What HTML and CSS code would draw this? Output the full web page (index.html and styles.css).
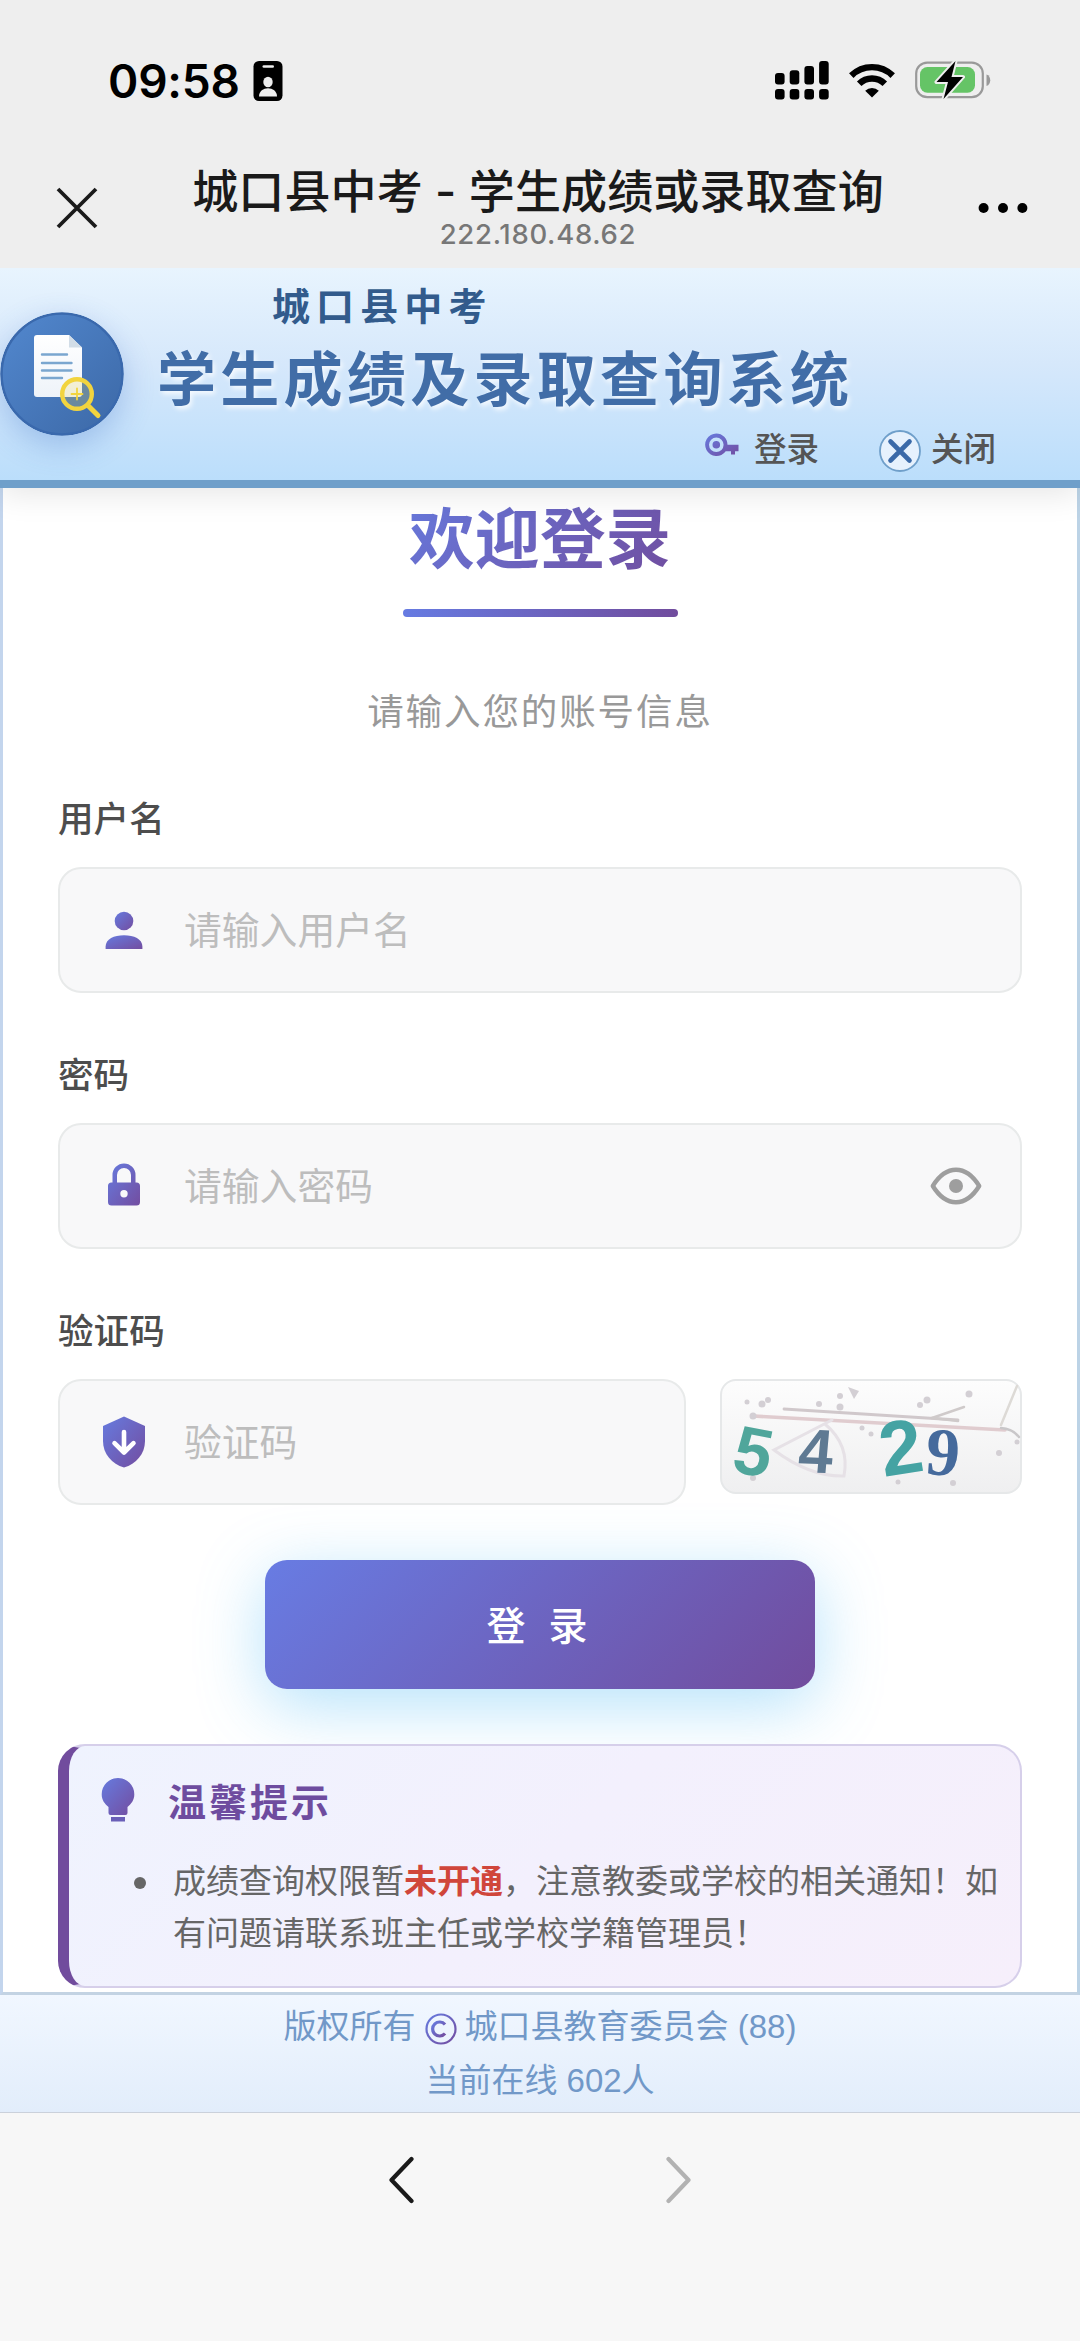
FILE: index.html
```html
<!DOCTYPE html>
<html lang="zh-CN">
<head>
<meta charset="utf-8">
<title>城口县中考 - 学生成绩或录取查询</title>
<link rel="stylesheet" href="styles.css">
</head>
<body>
<svg class="defs" width="0" height="0" aria-hidden="true">
  <defs>
    <linearGradient id="brand" x1="0" y1="0" x2="1" y2="1"><stop offset="0" stop-color="#667bdf"/><stop offset="1" stop-color="#734da0"/></linearGradient>
    <linearGradient id="badge" x1="0" y1="0" x2="1" y2="1"><stop offset="0" stop-color="#5288cf"/><stop offset="1" stop-color="#3c68a6"/></linearGradient>
    <linearGradient id="paper" x1="0" y1="0" x2="0" y2="1"><stop offset="0" stop-color="#ffffff"/><stop offset="1" stop-color="#eef3f9"/></linearGradient>
    <linearGradient id="noise" x1="0" y1="0" x2="0" y2="1"><stop offset="0" stop-color="#fdfdfd"/><stop offset="1" stop-color="#efeff0"/></linearGradient>
  </defs>
</svg>

<div class="status-bar">
  <div class="status-left">
    <span class="clock">09:58</span>
    <svg class="id-icon" width="30" height="40" viewBox="0 0 30 40"><rect x=".5" width="29" height="40" rx="5.5"/><rect x="9.5" y="4.2" width="11.5" height="2.6" rx="1.3" fill="#eee"/><ellipse cx="15" cy="21" rx="4.7" ry="5.3" fill="#eee"/><path d="M6 35.5c0-11 18-11 18 0z" fill="#eee"/></svg>
  </div>
  <div class="status-right">
    <svg width="54" height="39" viewBox="0 0 54 39"><rect y="12" width="9.6" height="11.5" rx="3"/><rect x="14.7" y="9.3" width="9.6" height="14.2" rx="3"/><rect x="29.4" y="5" width="9.6" height="18.5" rx="3"/><rect x="44.1" width="9.6" height="23.5" rx="3"/><rect y="28" width="9.6" height="10.5" rx="3"/><rect x="14.7" y="28" width="9.6" height="10.5" rx="3"/><rect x="29.4" y="28" width="9.6" height="10.5" rx="3"/><rect x="44.1" y="28" width="9.6" height="10.5" rx="3"/></svg>
    <svg class="wifi" width="46" height="35" viewBox="0 0 46 35"><g fill="none" stroke="#000" stroke-width="6.4"><path d="M2.3 12.6a29.5 29.5 0 0 1 41.4 0"/><path d="M10.2 20.8a18.2 18.2 0 0 1 25.6 0"/></g><path d="M23 34.5l-6.8-6.8a9.8 9.8 0 0 1 13.6 0z"/></svg>
    <svg class="battery" width="76" height="40" viewBox="0 0 76 40"><rect x="1.2" y="2.6" width="66.6" height="34.6" rx="11" fill="none" stroke="#999" stroke-width="2.2"/><rect x="5" y="7" width="55" height="25.8" rx="7.5" fill="#65c466"/><path d="M71.5 14.5c5 1.5 5 10 0 11.5z" fill="#999"/><path d="M40.5 1L21.5 22h11.5L28.5 39 48 17H36.5z" fill="#000" stroke="#eee" stroke-width="4" paint-order="stroke" stroke-linejoin="round"/></svg>
  </div>
</div>

<div class="nav-bar">
  <svg class="nav-close" width="42" height="42" viewBox="0 0 42 42"><path d="M2 2l38 38M40 2L2 40" stroke="#1a1a1a" stroke-width="3.8"/></svg>
  <div class="nav-titles">
    <div class="nav-title">城口县中考 - 学生成绩或录取查询</div>
    <div class="nav-host">222.180.48.62</div>
  </div>
  <svg class="nav-more" width="50" height="12" viewBox="0 0 50 12"><circle cx="5.6" cy="6" r="5"/><circle cx="25" cy="6" r="5"/><circle cx="44.4" cy="6" r="5"/></svg>
</div>

<header class="site-header">
  <svg class="logo" width="124" height="124" viewBox="0 0 124 124">
    <circle cx="62" cy="62" r="60.5" fill="url(#badge)" stroke="#3a69ad" stroke-width="2.6"/>
    <path d="M37 23h32l13 12.500V82a3 3 0 0 1-3 3H37a3 3 0 0 1-3-3V26a3 3 0 0 1 3-3z" fill="url(#paper)"/>
    <path d="M69 23l13 12.500H69z" fill="#d2dde7"/>
    <path d="M42 42.500h25M42 51h29.500M42 58.500h29.500M42 66h20" stroke="#7aa6cf" stroke-width="2.4" stroke-linecap="round"/>
    <circle cx="77" cy="82" r="14.8" fill="#f4d956" fill-opacity=".22" stroke="#f2d43e" stroke-width="4.4"/>
    <path d="M88.500 94L98 103.500" stroke="#f2d43e" stroke-width="5" stroke-linecap="round"/>
    <path d="M77 76.500v11M71.500 82h11" stroke="#f2d43e" stroke-width="1.8" stroke-linecap="round"/>
  </svg>
  <div class="brand">
    <div class="brand-region">城口县中考</div>
    <h1 class="brand-name">学生成绩及录取查询系统</h1>
    <nav class="brand-links">
      <a class="link-login"><svg width="34" height="24" viewBox="0 0 34 24"><path fill="url(#brand)" fill-rule="evenodd" d="M11.300.500a11.300 11.300 0 0 1 11.200 11.300H33.500v6.500H30V21.500H26V18.300H20.700A11.300 11.300 0 1 1 11.300.500zM11.300 4.500a7.300 7.300 0 1 0 0 14.600 7.300 7.300 0 0 0 0-14.600zM11.300 8a3.800 3.800 0 1 1 0 7.600 3.800 3.800 0 0 1 0-7.600z"/></svg><span>登录</span></a>
      <a class="link-close"><svg width="42" height="44" viewBox="0 0 42 44"><circle cx="21" cy="22" r="20" fill="#e6f1fd" stroke="#6f9fca" stroke-width="1.8"/><path d="M11.500 12.500l19 19M30.500 12.500l-19 19" stroke="#3a69a8" stroke-width="4.6" stroke-linecap="round"/></svg><span>关闭</span></a>
    </nav>
  </div>
</header>

<main class="panel">
  <h2 class="welcome"><span>欢迎登录</span></h2>
  <div class="rule"></div>
  <p class="hint">请输入您的账号信息</p>

  <label class="label">用户名</label>
  <div class="field">
    <svg class="field-icon" width="44" height="52" viewBox="0 0 44 52"><g fill="url(#brand)"><circle cx="22" cy="17" r="9.300"/><path d="M3.600 45v-2.500C3.600 35 12 31.200 22 31.200S40.400 35 40.400 42.500V45z"/></g></svg>
    <span class="placeholder">请输入用户名</span>
  </div>

  <label class="label">密码</label>
  <div class="field">
    <svg class="field-icon" width="44" height="52" viewBox="0 0 44 52"><path fill="url(#brand)" fill-rule="evenodd" d="M10.500 22.500V15a11.500 11.500 0 0 1 23 0v7.500H34.500a3.500 3.500 0 0 1 3.500 3.500V42a3.500 3.500 0 0 1-3.500 3.500h-25A3.500 3.500 0 0 1 6 42V26a3.500 3.500 0 0 1 3.500-3.500zM15 22.500h14V15a7 7 0 0 0-14 0zM22 30a3.700 3.700 0 1 0 0 7.400 3.700 3.700 0 0 0 0-7.400z"/></svg>
    <span class="placeholder">请输入密码</span>
    <svg class="eye" width="52" height="38" viewBox="0 0 52 38"><path d="M2.800 19C9 9 17 2.800 26 2.800S43 9 49.200 19C43 29 35 35.200 26 35.200S9 29 2.800 19z" fill="none" stroke="#9e9e9e" stroke-width="4.4" stroke-linejoin="round"/><circle cx="26" cy="19" r="7" fill="#9e9e9e"/></svg>
  </div>

  <label class="label">验证码</label>
  <div class="captcha-row">
    <div class="field">
      <svg class="field-icon" width="44" height="52" viewBox="0 0 44 52"><path fill="url(#brand)" d="M22 .500L43 10V25C43 38 34 48 22 51.500 10 48 1 38 1 25V10z"/><path d="M22 16v20M12.500 27.200L22 36.500l9.500-9.300" fill="none" stroke="#fff" stroke-width="4.6" stroke-linecap="round" stroke-linejoin="round"/></svg>
      <span class="placeholder">验证码</span>
    </div>
    <svg class="captcha" width="302" height="115" viewBox="0 0 302 115">
      <rect x="1" y="1" width="300" height="113" rx="15" fill="url(#noise)" stroke="#e6e8e9" stroke-width="2"/>
      <g fill="none" stroke-linecap="round">
        <path d="M64 30L238 41" stroke="#d0c8cb" stroke-width="2.8"/>
        <path d="M33 37L285 51" stroke="#e0cccf" stroke-width="3.6"/>
        <path d="M212 39L244 28" stroke="#cfcaca" stroke-width="2.5"/>
        <path d="M212 39L238 42" stroke="#cfcaca" stroke-width="2.5"/>
        <path d="M281 46L297 7" stroke="#dddad6" stroke-width="2.5"/>
        <path d="M281 49q12 1 18 9" stroke="#c9c7c9" stroke-width="2.5"/>
        <path d="M112 41L54 71Q90 98 124 97 130 66 105 45" stroke="#e6e1e6" stroke-width="3"/>
      </g>
      <g fill="#d3cfd4"><circle cx="27" cy="23" r="2.5"/><circle cx="42" cy="25" r="3.5"/><circle cx="48" cy="21" r="3"/><circle cx="33" cy="37" r="3.5"/><circle cx="99" cy="25" r="3"/><circle cx="120" cy="17" r="3"/><circle cx="120" cy="28" r="3.5"/><path d="M128 8l11 4-5 8z"/><circle cx="200" cy="26" r="3"/><circle cx="207" cy="21" r="3.5"/><circle cx="249" cy="15" r="3.5"/><circle cx="142" cy="49" r="2.5"/><circle cx="151" cy="55" r="2.5"/><circle cx="279" cy="74" r="3"/><circle cx="297" cy="63" r="2.5"/><circle cx="178" cy="103" r="2.5"/><circle cx="233" cy="104" r="3"/><circle cx="33" cy="99" r="3"/></g>
      <text class="digit-sans" font-size="68" fill="#50a69b" transform="translate(10 92) rotate(11) skewX(-1)">5</text>
      <text class="digit-sans" font-size="62" fill="#5f7a93" transform="translate(77 93) rotate(2) skewX(-3)">4</text>
      <text class="digit-sans" x="159" y="95" font-size="77" fill="#45a3a3" transform="rotate(-9 180 66)">2</text>
      <text class="digit-serif" x="206" y="96" font-size="68" fill="#456a9c" transform="rotate(4 222 73)">9</text>
    </svg>
  </div>

  <button class="submit" type="button">登 录</button>

  <section class="tips">
    <div class="tips-head">
      <svg width="34" height="44" viewBox="0 0 34 44"><g fill="url(#brand)"><path d="M17 0a16.300 16.300 0 0 1 16.300 16.300c0 6-3 9.500-6.800 12.700V35a2 2 0 0 1-2 2h-15a2 2 0 0 1-2-2V29C3.700 25.800.700 22.300.700 16.300A16.300 16.300 0 0 1 17 0z"/></g><rect x="10" y="39" width="14" height="4.500" fill="#6a5fb8"/></svg>
      <span>温馨提示</span>
    </div>
    <ul class="tips-list">
      <li><i class="dot"></i><p>成绩查询权限暂<strong>未开通</strong>，注意教委或学校的相关通知！如有问题请联系班主任或学校学籍管理员！</p></li>
    </ul>
  </section>
</main>

<footer class="site-footer">
  <div class="foot-line"><span>版权所有</span><svg width="32" height="32" viewBox="0 0 32 32"><g fill="none" stroke="url(#brand)"><circle cx="16" cy="16" r="14.5" stroke-width="2.2"/><path d="M20 11.500a7 7 0 1 0 0 9" stroke-width="3.2"/></g></svg><span>城口县教育委员会 (88)</span></div>
  <div class="foot-line">当前在线 602人</div>
</footer>

<div class="toolbar">
  <svg width="26" height="48" viewBox="0 0 26 48"><path d="M23.500 3L3.500 24l20 21" fill="none" stroke="#1a1a1a" stroke-width="4.2" stroke-linecap="round" stroke-linejoin="round"/></svg>
  <svg width="26" height="48" viewBox="0 0 26 48"><path d="M2.500 3l20 21-20 21" fill="none" stroke="#b2b2b2" stroke-width="4.2" stroke-linecap="round" stroke-linejoin="round"/></svg>
</div>
</body>
</html>
```

FILE: styles.css
```css
* { box-sizing: border-box; }

body {
  margin: 0;
  width: 1080px;
  height: 2341px;
  display: flex;
  flex-direction: column;
  background: #f7f7f7;
  font-family: "Liberation Sans", "Noto Sans CJK SC", sans-serif;
}

svg { display: block; flex: none; }
.defs { position: absolute; }

/* phone chrome */
.status-bar {
  height: 148px;
  padding: 14px 89px 0 108px;
  display: flex;
  align-items: center;
  justify-content: space-between;
  background: #eee;
}
.status-left, .status-right { display: flex; align-items: center; }
.clock { font: 600 46px/56px Inter, sans-serif; letter-spacing: -.2px; }
.id-icon { margin-left: 13px; margin-top: -1px; }
.status-right { margin-top: -2px; }
.wifi { margin-left: 20px; }
.battery { margin-left: 20px; }

.nav-bar {
  position: relative;
  z-index: 2;
  height: 120px;
  padding: 0 52px 0 56px;
  display: flex;
  align-items: center;
  justify-content: space-between;
  background: #eee;
}
.nav-titles { text-align: center; margin-top: -5px; }
.nav-title {
  font: 500 46px/60px Inter, "Noto Sans CJK SC", sans-serif;
  letter-spacing: .1px;
  color: #1a1a1a;
  white-space: nowrap;
}
.nav-host { margin-top: -3px; font: 500 27.5px/32px Inter, sans-serif; letter-spacing: .7px; color: #777; }

/* site header */
.site-header {
  position: relative;
  z-index: 1;
  height: 220px;
  display: flex;
  border-bottom: 8px solid #6f9fca;
  background: linear-gradient(180deg, #e8f4fe 0%, #d6e8fb 45%, #bbdefb 100%);
  box-shadow: 0 6px 30px rgba(0, 0, 0, .1);
  font-family: "Noto Sans CJK SC", sans-serif;
}
.logo {
  margin-top: 44px;
  border-radius: 50%;
  box-shadow: 0 10px 30px rgba(60, 110, 200, .3);
}
.brand { flex: 1; padding: 8px 84px 0 33px; }
.brand-region {
  padding-left: 115px;
  font-size: 38px;
  line-height: 56px;
  font-weight: 700;
  letter-spacing: 6.1px;
  color: #325b8c;
}
.brand-name {
  margin: 4px 0 0;
  font-size: 59px;
  line-height: 80px;
  font-weight: 700;
  letter-spacing: 4.3px;
  color: #416da7;
  text-shadow: 2px 3px 5px rgba(255, 255, 255, .8);
  white-space: nowrap;
}
.brand-links {
  display: flex;
  justify-content: flex-end;
  gap: 60px;
  margin-top: 4px;
  font-size: 32.5px;
  line-height: 50px;
  font-weight: 500;
  color: #555;
}
.brand-links a { display: flex; align-items: center; }
.link-login svg { margin: -4px 15px 0 0; }
.link-close svg { margin: 9px 10px 0 0; }

/* login panel */
.panel {
  height: 1507px;
  padding: 9px 55px 0;
  border: 3px solid #c3d5ed;
  border-top: 0;
  border-right-color: #bcd3e6;
  border-bottom-color: #c3d3e3;
  background: #fff;
  font-family: "Noto Sans CJK SC", sans-serif;
}
.welcome { margin: 0; text-align: center; font-size: 65.5px; line-height: 76px; font-weight: 700; }
.welcome span {
  padding: 0 10px;
  background: linear-gradient(135deg, #667bdf, #714c9d);
  -webkit-background-clip: text;
  background-clip: text;
  color: transparent;
}
.rule {
  width: 275px;
  height: 8px;
  margin: 36px auto 0;
  border-radius: 4px;
  background: linear-gradient(90deg, #667be2, #714c9d);
}
.hint {
  margin: 68px 0 0;
  text-align: center;
  font-size: 36.5px;
  line-height: 50px;
  letter-spacing: 1.9px;
  color: #999;
}
.label {
  display: block;
  margin-top: 54.5px;
  font-size: 35.6px;
  line-height: 50px;
  font-weight: 500;
  color: #4d4d4d;
}
.hint + .label { margin-top: 57.3px; }
.field {
  height: 126px;
  margin-top: 25.2px;
  padding: 0 38px 0 42px;
  display: flex;
  align-items: center;
  border: 2.5px solid #e8eaea;
  border-radius: 23px;
  background: #f8f8f9;
}
.placeholder {
  flex: 1;
  margin-left: 38px;
  margin-top: -4px;
  font-size: 37.8px;
  line-height: 54px;
  color: #bdbdbd;
}
.captcha-row { display: flex; align-items: flex-start; gap: 34px; margin-top: 25.2px; }
.captcha-row .field { flex: 1; margin: 0; }
.digit-sans { font-family: "Liberation Sans", sans-serif; font-weight: 700; }
.digit-serif { font-family: "Liberation Serif", serif; font-weight: 700; }

.submit {
  display: block;
  width: 550px;
  height: 129px;
  margin: 55px auto 0;
  padding: 0 0 3px 1px;
  border: 0;
  border-radius: 22px;
  background: linear-gradient(135deg, #687ce3, #714c9d);
  box-shadow: 0 16px 66px rgba(79, 185, 245, .42);
  font: 500 39px/54px "Noto Sans CJK SC", sans-serif;
  letter-spacing: 7px;
  color: #fff;
}

.tips {
  height: 244px;
  margin-top: 55px;
  padding: 27px 12px 0 32px;
  border: 2.5px solid #d6cfea;
  border-left: 11px solid #714c9d;
  border-radius: 27px;
  background: linear-gradient(135deg, #eff3fe, #f3f0fd 50%, #f6effb);
}
.tips-head {
  display: flex;
  align-items: center;
  font-size: 38px;
  line-height: 54px;
  font-weight: 700;
  letter-spacing: 3px;
  color: #6e4c9f;
}
.tips-head span { margin-left: 33px; }
.tips-list {
  margin: 26px 0 0;
  padding: 0 0 0 33px;
  list-style: none;
  font-size: 33px;
  line-height: 52px;
  color: #666;
}
.tips-list li { display: flex; }
.tips-list p { flex: 1; margin: 0 0 0 27px; }
.tips-list strong { color: #d0463b; }
.dot {
  width: 12px;
  height: 12px;
  margin-top: 24px;
  border-radius: 50%;
  background: #666;
}

/* footer */
.site-footer {
  height: 118px;
  padding-top: 5px;
  border-bottom: 1px solid #cbd1db;
  background: linear-gradient(180deg, #f1f7ff, #e2edfb);
  color: #7198c8;
  font-size: 33px;
}
.foot-line { display: flex; align-items: center; justify-content: center; line-height: 54px; }
.foot-line svg { margin: 4px 8px 0 9px; }

.toolbar { display: flex; justify-content: center; gap: 252px; padding-top: 43px; }
```
